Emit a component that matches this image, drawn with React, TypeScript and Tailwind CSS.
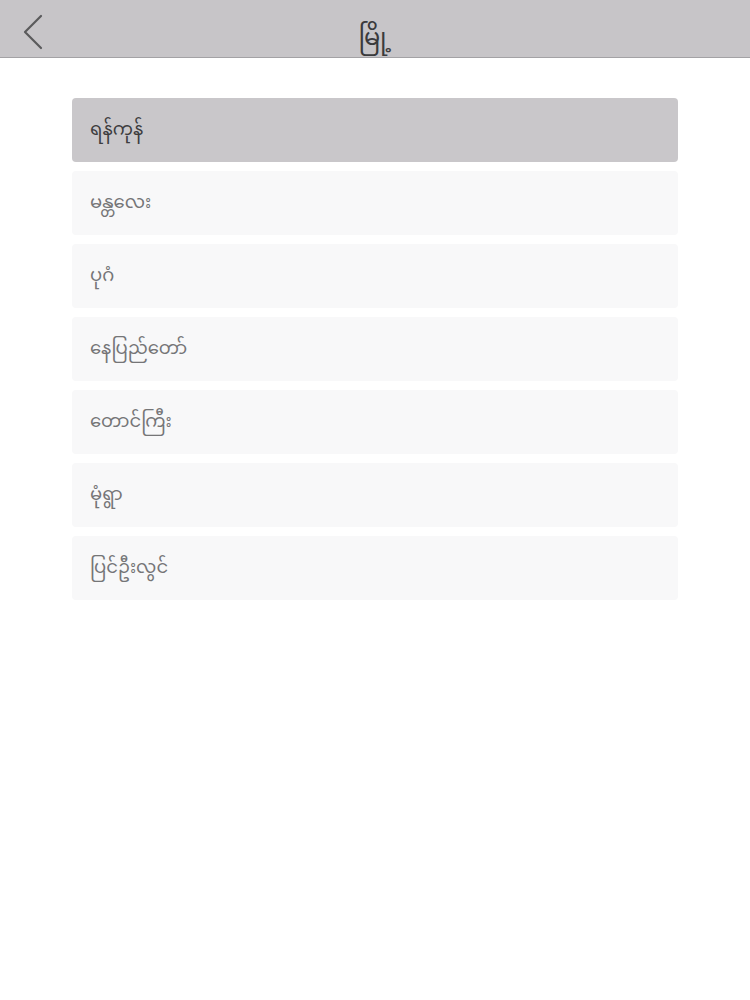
import React, { useState } from "react";

const CITIES = [
  "ရန်ကုန်",
  "မန္တလေး",
  "ပုဂံ",
  "နေပြည်တော်",
  "တောင်ကြီး",
  "မုံရွာ",
  "ပြင်ဦးလွင်",
];

const FONT = {
  fontFamily:
    '"Noto Sans Myanmar", "Myanmar Text", Padauk, "Noto Sans", "DejaVu Sans", sans-serif',
};

export default function App() {
  const [selected, setSelected] = useState(0);

  return (
    <div className="w-[750px] h-[1000px] bg-white" style={FONT}>
      {/* Header */}
      <div className="relative h-[58px] bg-[#c7c5c8] border-b border-[#a3a2a5] flex items-end justify-center">
        <button className="absolute left-[18px] top-[9px] p-1">
          <svg width="24" height="38" viewBox="0 0 24 38" fill="none">
            <path d="M19 3 L3 19 L19 35" stroke="#5a5a5c" strokeWidth="2.2" strokeLinecap="round" strokeLinejoin="round" />
          </svg>
        </button>
        <span className="text-[24px] leading-none pb-[5px] text-[#3a3a3c]">မြို့</span>
      </div>

      {/* List */}
      <div className="px-[72px] pt-[40px] flex flex-col gap-[9px]">
        {CITIES.map((city, i) => (
          <div
            key={city}
            onClick={() => setSelected(i)}
            className={`h-[64px] rounded-[4px] flex items-center px-[18px] text-[18px] cursor-pointer ${
              selected === i ? "bg-[#c9c7ca] text-[#3d3d3f]" : "bg-[#f8f8f9] text-[#757577]"
            }`}
          >
            {city}
          </div>
        ))}
      </div>
    </div>
  );
}
